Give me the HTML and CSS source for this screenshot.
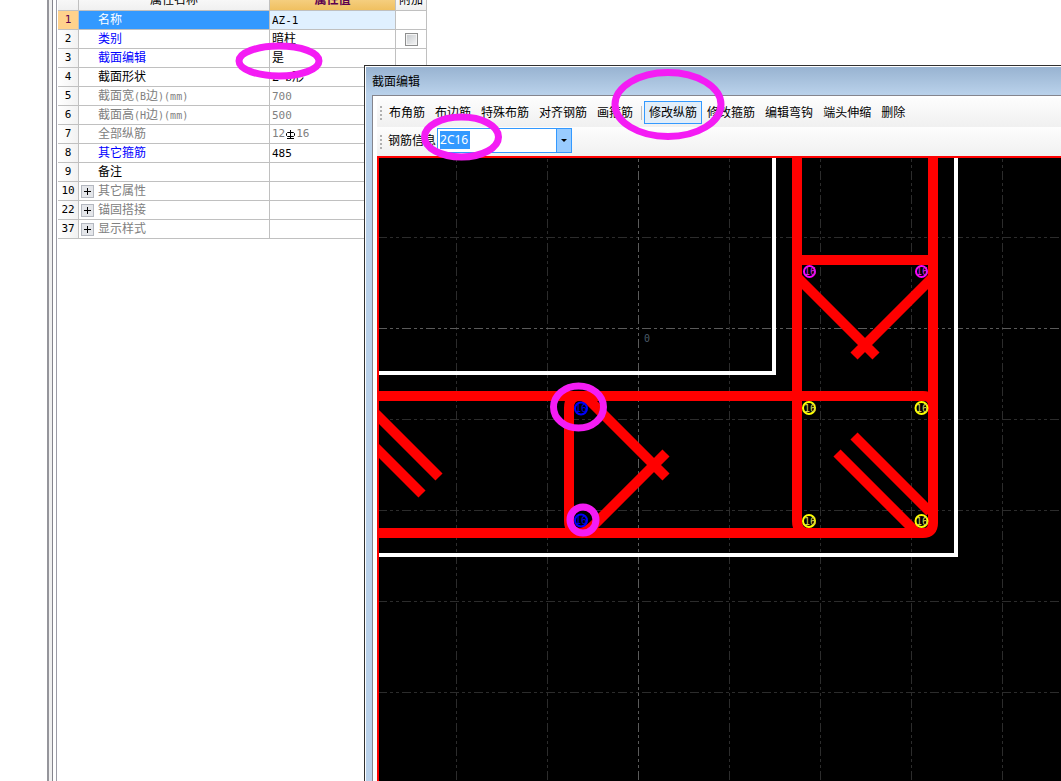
FILE: index.html
```html
<!DOCTYPE html>
<html lang="zh-CN">
<head>
<meta charset="utf-8">
<title>截面编辑</title>
<link rel="stylesheet" href="styles.css">
</head>
<body>
<main class="workspace">
  <div class="side-space"></div>
  <div class="splitter"></div>
  <section class="properties">
    <table class="grid">
      <colgroup><col class="c-num"><col class="c-name"><col class="c-value"><col class="c-extra"></colgroup>
      <thead>
        <tr><th></th><th>属性名称</th><th class="active-head">属性值</th><th>附加</th></tr>
      </thead>
      <tbody>
        <tr class="selected"><th>1</th><td>名称</td><td><span class="lat">AZ-1</span></td><td></td></tr>
        <tr class="link"><th>2</th><td>类别</td><td>暗柱</td><td class="check"><input type="checkbox" aria-label="附加"></td></tr>
        <tr class="link"><th>3</th><td>截面编辑</td><td>是</td><td></td></tr>
        <tr><th>4</th><td>截面形状</td><td><span class="lat">Z-b</span>形</td><td></td></tr>
        <tr class="muted"><th>5</th><td>截面宽<span class="lat">(B</span>边<span class="lat">)(mm)</span></td><td><span class="lat">700</span></td><td></td></tr>
        <tr class="muted"><th>6</th><td>截面高<span class="lat">(H</span>边<span class="lat">)(mm)</span></td><td><span class="lat">500</span></td><td></td></tr>
        <tr class="muted"><th>7</th><td>全部纵筋</td><td><div class="rebar"><span class="lat">12</span><svg width="9" height="9" viewBox="0 0 9 9" role="img" aria-label="C"><path d="M4.500 0V9M1 8.500H8M1.500 2.500H7.500L8.500 3.500V5.500L7.500 6.500H1.500L.5 5.500V3.500Z" fill="none" stroke="#000"/></svg><span class="lat">16</span></div></td><td></td></tr>
        <tr class="link"><th>8</th><td>其它箍筋</td><td><span class="lat">485</span></td><td></td></tr>
        <tr><th>9</th><td>备注</td><td></td><td></td></tr>
        <tr class="muted"><th>10</th><td class="tree"><div class="node"><button class="expand" aria-label="展开其它属性"></button>其它属性</div></td><td></td><td></td></tr>
        <tr class="muted"><th>22</th><td class="tree"><div class="node"><button class="expand" aria-label="展开锚固搭接"></button>锚固搭接</div></td><td></td><td></td></tr>
        <tr class="muted"><th>37</th><td class="tree"><div class="node"><button class="expand" aria-label="展开显示样式"></button>显示样式</div></td><td></td><td></td></tr>
      </tbody>
    </table>
  </section>
</main>

<section class="dialog" aria-label="截面编辑">
  <header class="title">截面编辑</header>
  <div class="client">
    <div class="toolbar">
      <span class="grip"></span>
      <button>布角筋</button><button>布边筋</button><button>特殊布筋</button><button>对齐钢筋</button><button>画箍筋</button><span class="sep"></span><button class="on">修改纵筋</button><button>修改箍筋</button><button>编辑弯钩</button><button>端头伸缩</button><button>删除</button>
    </div>
    <div class="toolbar">
      <span class="grip"></span>
      <label for="rebar-info">钢筋信息</label>
      <div class="combo"><input id="rebar-info" type="text" value="2C16"><button aria-label="选择钢筋信息"></button></div>
    </div>
    <div class="canvas">
      <svg class="drawing" width="100%" height="100%">
        <g transform="translate(-379 -158)">
          <g class="axis">
            <path d="M456.500 147V3000M547.500 147V3000M729.500 147V3000M820.500 147V3000M911.500 147V3000M1002.500 147V3000"/>
            <path d="M378 237.500H4000M378 419.500H4000M378 510.500H4000M378 601.500H4000M378 692.500H4000"/>
            <path class="origin" d="M638.500 147V3000M378 328.500H4000"/>
          </g>
          <text class="zero" x="644" y="342">0</text>
          <g class="wall"><path d="M774 150V373H370M956 150V555H370"/></g>
          <g class="bars">
            <path d="M797 150V521Q797 533 809 533M933 150V523Q933 533 923 533H370M370 396H923Q933 396 933 406"/>
            <path d="M797 260H933M797 277L876 356M933 277L854 356"/>
            <path d="M854 436L930 512M837 453L915 531M439 477L370 408M422 494L370 442"/>
            <path d="M666 477L592 403Q585 396 580 396Q569 396 569 408V521Q569 533 581 533Q588 531 594 525L666 453"/>
          </g>
          <g class="points magenta"><circle cx="809.500" cy="271.500" r="5.500"/><circle cx="921.500" cy="271.500" r="5.500"/><text x="804" y="275">16</text><text x="916" y="275">16</text></g>
          <g class="points yellow"><circle cx="809" cy="408" r="6"/><circle cx="921.500" cy="408" r="6"/><circle cx="809" cy="521" r="6"/><circle cx="921.500" cy="521" r="6"/><text x="804" y="412">16</text><text x="916" y="412">16</text><text x="804" y="525">16</text><text x="916" y="525">16</text></g>
          <g class="points blue"><circle cx="581" cy="408.500" r="6"/><circle cx="581" cy="520.500" r="6"/><text x="575" y="412">16</text><text x="575" y="524">16</text></g>
        </g>
      </svg>
    </div>
  </div>
</section>

<svg class="marks" width="100%" height="100%" aria-hidden="true">
  <ellipse cx="279" cy="61" rx="40" ry="15"/>
  <ellipse cx="461.500" cy="137" rx="37" ry="20"/>
  <ellipse cx="668" cy="104.500" rx="53" ry="32"/>
  <ellipse cx="578.500" cy="407" rx="25" ry="21"/>
  <circle cx="583" cy="520" r="13"/>
</svg>
</body>
</html>
```
FILE: styles.css
```css
* { box-sizing: border-box; }
html, body { height: 100%; }
body {
  margin: 0;
  overflow: hidden;
  background: #fff;
  color: #000;
  font: 12px/18px "Liberation Sans", "Noto Sans CJK SC", sans-serif;
}
button, input { font: inherit; color: inherit; }

.workspace { display: flex; height: 100%; overflow: hidden; }
.side-space { flex: 0 0 47px; }
.splitter {
  flex: 0 0 6px;
  background: #f0f0f0;
  border-left: 2px solid #95959b;
  border-right: 1px solid #85858d;
}
.properties { flex: 1; margin-left: 3px; border-left: 1px solid #9c9ca6; padding-left: 1px; }

.grid { width: 369px; margin-top: -10px; table-layout: fixed; border-spacing: 0; }
.c-num { width: 21px; }
.c-name { width: 191px; }
.c-value { width: 126px; }
.c-extra { width: 31px; }
.grid th, .grid td {
  height: 19px;
  padding: 0;
  border-right: 1px solid #c0c0c0;
  border-bottom: 1px solid #c0c0c0;
  font-weight: normal;
  line-height: 18px;
  text-align: left;
  white-space: nowrap;
  overflow: hidden;
}
.grid thead th { height: 21px; text-align: center; background: linear-gradient(#fff, #f0f0f0); }
.grid thead .active-head { background: linear-gradient(#f9dc9d, #f0c060); color: #5c0050; font-weight: bold; }
.grid tbody th {
  font-family: "DejaVu Sans Mono", monospace;
  font-size: 11px;
  text-align: center;
  background: linear-gradient(90deg, #fff, #f2f2f2);
}
.grid td:nth-child(2) { padding-left: 19px; }
.grid td:nth-child(3) { padding-left: 2px; }
.grid td.tree { padding-left: 2px; }
.lat { font-family: "DejaVu Sans Mono", monospace; font-size: 10px; line-height: 10px; }
.grid td:nth-child(3) .lat { font-size: 11px; }
.selected td:nth-child(2) { background: #3399ff; color: #fff; }
.selected td:nth-child(3) { background: #e0f0ff; }
.grid .selected th { background: #ffd28c; color: #5c0050; }
.link td:nth-child(2) { color: #00f; }
.muted td { color: #808080; }
.node { display: flex; align-items: center; gap: 4px; }
.rebar { display: flex; align-items: center; gap: 1px; height: 18px; }
.expand {
  width: 13px;
  height: 13px;
  padding: 0;
  border: 1px solid #b4b8c0;
  background:
    linear-gradient(#000, #000) center / 7px 1px no-repeat,
    linear-gradient(#000, #000) center / 1px 7px no-repeat,
    #e4e6ea;
}
.check input {
  appearance: none;
  display: block;
  width: 13px;
  height: 13px;
  margin: 0 0 0 9px;
  border: 1px solid #8e8f8f;
  background: linear-gradient(135deg, #c4c8cc, #f6f6f6);
  box-shadow: inset 0 0 0 1px #f4f4f4;
}

.dialog {
  position: absolute;
  left: 364px;
  top: 65px;
  right: 0;
  bottom: 0;
  display: flex;
  flex-direction: column;
  padding-left: 7px;
  border-left: 1px solid #303030;
  border-top: 1px solid #303030;
  background: #b9d1ea;
  box-shadow: inset 1px 1px #fff;
}
.title {
  height: 27px;
  margin: 1px 0 0 -6px;
  padding-left: 6px;
  line-height: 30px;
  background: linear-gradient(#98b3d1, #b9d1ea);
}
.client {
  flex: 1;
  display: flex;
  flex-direction: column;
  min-height: 0;
  margin-top: 1px;
  padding: 2px 0 0 4px;
  border-left: 1px solid #85858d;
  border-top: 1px solid #85858d;
  background: #fff;
}
.toolbar {
  display: flex;
  align-items: center;
  height: 29px;
  white-space: nowrap;
  background: linear-gradient(#fdfdfd, #f0f0f0);
}
.grip {
  flex: 0 0 2px;
  height: 14px;
  margin: 0 2px 0 3px;
  background: repeating-linear-gradient(#b0b0b0 0 2px, transparent 2px 4px);
}
.toolbar > button { height: 23px; padding: 0 5px; border: 0; background: none; line-height: 20px; }
.toolbar > .on { padding: 0 4px; border: 1px solid #3399ff; background: #e2eef9; line-height: 18px; }
.sep { flex: 0 0 1px; height: 14px; margin: 0 2px 0 3px; background: #c0c0c0; }
.toolbar label { margin: 0 1px 0 4px; padding-bottom: 2px; }
.combo { display: flex; width: 135px; height: 25px; margin-bottom: 2px; border: 1px solid #3399ff; background: #fff; }
.combo input {
  flex: 1;
  min-width: 0;
  padding: 0 2px 1px;
  border: 0;
  outline: 0;
  color: #fff;
  font-family: "Noto Sans", sans-serif;
  background: linear-gradient(#3399ff, #3399ff) 2px 2px / 30px 18px no-repeat;
}
.combo button {
  width: 15px;
  padding: 0;
  border: 0;
  border-left: 1px solid #3399ff;
  background: #99ccff;
  display: grid;
  place-items: center;
}
.combo button::after {
  content: "";
  border: 3px solid transparent;
  border-top-color: #000;
  border-bottom: 0;
}
.canvas { flex: 1; min-height: 0; border-left: 2px solid #f00; border-top: 2px solid #f00; background: #000; }
.drawing { display: block; }
.axis { fill: none; stroke: #2c2c2c; stroke-dasharray: 9 3 3 3 3 3; }
.axis .origin { stroke: #5a5a5a; }
.zero { fill: #4c5c68; font: 10px "DejaVu Sans Mono", monospace; }
.wall { fill: none; stroke: #fff; stroke-width: 4px; }
.bars { fill: none; stroke: #f00; stroke-width: 10px; }
.points circle { fill: #000; stroke-width: 2px; }
.points text { font: 10px "DejaVu Sans Mono", monospace; }
.magenta circle { stroke: #f0f; }
.magenta text { fill: #c828d8; }
.yellow circle { stroke: #ff0; }
.yellow text { fill: #d0d050; }
.blue circle { stroke: #00f; }
.blue text { fill: #0000e0; }

.marks { position: absolute; inset: 0; pointer-events: none; fill: none; stroke: #f41cf4; stroke-width: 7px; }
```
